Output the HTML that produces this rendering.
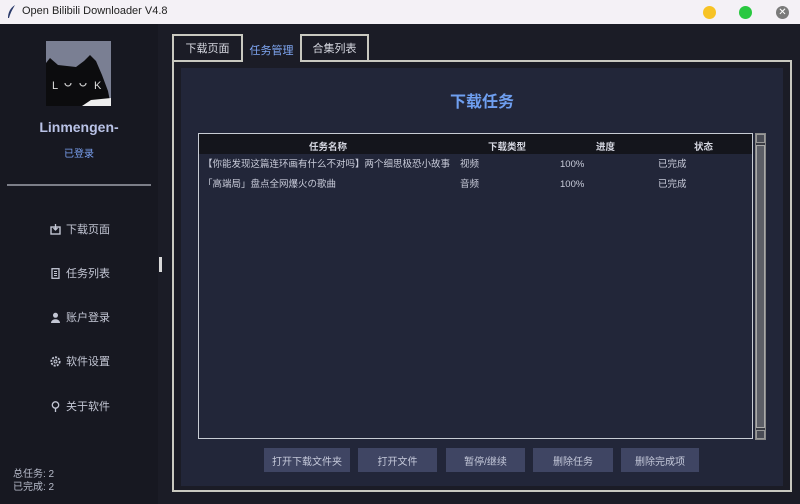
<!DOCTYPE html>
<html><head><meta charset="utf-8"><style>
*{margin:0;padding:0;box-sizing:border-box}
body{width:800px;height:504px;overflow:hidden;background:#1b1c26;font-family:"Liberation Sans","Noto Sans CJK SC",sans-serif;font-size:10px;color:#c8cbd8;position:relative}
.abs{position:absolute}
.title{left:0;top:0;width:800px;height:24px;background:#f4f1f6;color:#222;font-size:11px}
.side{left:0;top:24px;width:158px;height:480px;background:#171821}
.nav{left:50px;font-size:11px;color:#c3c6d4;display:flex;align-items:center;gap:5px}
.nav svg{width:11px;height:11px}
.btn{top:448px;height:24px;background:#3f4563;color:#c5c9da;font-size:10px;display:flex;align-items:center;justify-content:center}
.tab{top:34px;height:26px;border:2px solid #c9c9c0;border-bottom:none;background:#1b1c26;color:#d6d8e0;font-size:11px;display:flex;align-items:center;justify-content:center}
.row{left:203px;font-size:9.5px;color:#c9ccda;height:14px;line-height:14px}
</style></head><body>
<div class="abs title">
  <svg class="abs" style="left:7px;top:5px" width="9" height="14" viewBox="0 0 9 14"><path d="M8 0 C3 3 1 8 1 13 L2 13 C3 9 5 5 8 0Z" fill="#2a3a6a"/></svg>
  <span class="abs" style="left:22px;top:5px">Open Bilibili Downloader V4.8</span>
  <div class="abs" style="left:703px;top:6px;width:13px;height:13px;border-radius:50%;background:#f7c325"></div>
  <div class="abs" style="left:739px;top:6px;width:13px;height:13px;border-radius:50%;background:#29c840"></div>
  <div class="abs" style="left:776px;top:6px;width:13px;height:13px;border-radius:50%;background:#7a7a7a;color:#fff;font-size:10px;line-height:13px;text-align:center">✕</div>
</div>
<div class="abs side"></div>
<svg class="abs" style="left:46px;top:41px" width="65" height="65" viewBox="0 0 65 65">
  <rect width="65" height="65" fill="#7a7f93"/>
  <path d="M0 22 L4 17 L12 24 L30 26 L38 20 L44 14 L50 20 L56 34 L62 50 L65 65 L0 65 Z" fill="#0c0c0e"/>
  <path d="M36 65 L45 59 L65 57 L65 65Z" fill="#eee"/>
  <text x="6" y="48" fill="#ddd" font-size="11" font-family="Liberation Sans">L</text>
  <text x="48" y="48" fill="#ddd" font-size="11" font-family="Liberation Sans">K</text>
  <path d="M19 42 A3 3 0 1 0 25 42" fill="none" stroke="#ccc" stroke-width="1.2"/>
  <path d="M34 42 A3 3 0 1 0 40 42" fill="none" stroke="#ccc" stroke-width="1.2"/>
</svg>
<div class="abs" style="left:0;width:158px;top:119px;text-align:center;font-size:14px;font-weight:bold;color:#b9c2e6">Linmengen-</div>
<div class="abs" style="left:0;width:158px;top:145px;text-align:center;font-size:10px;color:#7aa0f0">已登录</div>
<div class="abs" style="left:7px;top:184px;width:144px;height:2px;background:#7c7e88"></div>
<div class="abs nav" style="top:221px"><svg viewBox="0 0 11 11"><rect x="1" y="3" width="9" height="7" fill="none" stroke="#c3c6d4" stroke-width="1.4"/><path d="M5.5 0 V6 M3.5 4 L5.5 6 L7.5 4" stroke="#c3c6d4" fill="none" stroke-width="1.3"/></svg>下载页面</div>
<div class="abs nav" style="top:265px"><svg viewBox="0 0 11 11"><rect x="2" y="0.7" width="7" height="9.6" fill="none" stroke="#c3c6d4" stroke-width="1.3"/><path d="M4 3.5H7M4 5.5H7M4 7.5H7" stroke="#c3c6d4"/></svg>任务列表</div>
<div class="abs nav" style="top:309px"><svg viewBox="0 0 11 11"><circle cx="5.5" cy="3.3" r="2.5" fill="#c3c6d4"/><path d="M1 11 C1 6 10 6 10 11Z" fill="#c3c6d4"/></svg>账户登录</div>
<div class="abs nav" style="top:353px"><svg viewBox="0 0 11 11"><circle cx="5.5" cy="5.5" r="4.2" fill="none" stroke="#c3c6d4" stroke-width="1.8" stroke-dasharray="2 1.2"/><circle cx="5.5" cy="5.5" r="1.5" fill="none" stroke="#c3c6d4"/></svg>软件设置</div>
<div class="abs nav" style="top:398px"><svg viewBox="0 0 11 11"><circle cx="5.5" cy="4" r="3.2" fill="none" stroke="#c3c6d4" stroke-width="1.3"/><path d="M5.5 7 V11" stroke="#c3c6d4" stroke-width="1.3"/></svg>关于软件</div>
<div class="abs" style="left:13px;top:468px;font-size:10px;color:#b8bccb;line-height:13px">总任务: 2<br>已完成: 2</div>
<div class="abs" style="left:159px;top:257px;width:3px;height:15px;background:#d9d9d9"></div>

<div class="abs tab" style="left:172px;width:71px">下载页面</div>
<div class="abs tab" style="left:300px;width:69px">合集列表</div>
<div class="abs" style="left:172px;top:60px;width:620px;height:432px;border:2px solid #c9c9c0;background:#1b1c26"></div>
<div class="abs" style="left:243px;top:37px;width:57px;height:25px;background:#1b1c26;color:#7fa6f2;font-size:11px;text-align:center;padding-top:5px">任务管理</div>
<div class="abs" style="left:181px;top:68px;width:602px;height:418px;background:#222639"></div>
<div class="abs" style="left:181px;top:88px;width:602px;text-align:center;font-size:16px;font-weight:bold;color:#6f9ff0">下载任务</div>

<div class="abs" style="left:198px;top:133px;width:555px;height:306px;border:1px solid #c8ccd4;background:#222639"></div>
<div class="abs" style="left:199px;top:134px;width:553px;height:20px;background:#14151c;font-size:9.5px;font-weight:bold;color:#d6d8e2">
  <span class="abs" style="left:110px;top:5px">任务名称</span>
  <span class="abs" style="left:289px;top:5px">下载类型</span>
  <span class="abs" style="left:397px;top:5px">进度</span>
  <span class="abs" style="left:495px;top:5px">状态</span>
</div>
<div class="abs row" style="top:158px">【你能发现这篇连环画有什么不对吗】两个细思极恐小故事</div>
<div class="abs row" style="left:460px;top:158px">视频</div>
<div class="abs row" style="left:560px;top:158px">100%</div>
<div class="abs row" style="left:658px;top:158px">已完成</div>
<div class="abs row" style="top:178px">「高端局」盘点全网爆火の歌曲</div>
<div class="abs row" style="left:460px;top:178px">音频</div>
<div class="abs row" style="left:560px;top:178px">100%</div>
<div class="abs row" style="left:658px;top:178px">已完成</div>

<div class="abs" style="left:755px;top:133px;width:11px;height:307px;background:#3a3c44;border:1px solid #888"></div>
<div class="abs" style="left:756px;top:134px;width:9px;height:9px;background:#4a4c55;border:1px solid #999"></div>
<div class="abs" style="left:756px;top:145px;width:9px;height:283px;background:#5c5e66;border:1px solid #aaa"></div>
<div class="abs" style="left:756px;top:430px;width:9px;height:9px;background:#4a4c55;border:1px solid #999"></div>

<div class="abs btn" style="left:264px;width:86px">打开下载文件夹</div>
<div class="abs btn" style="left:358px;width:79px">打开文件</div>
<div class="abs btn" style="left:446px;width:79px">暂停/继续</div>
<div class="abs btn" style="left:533px;width:80px">删除任务</div>
<div class="abs btn" style="left:621px;width:78px">删除完成项</div>
</body></html>
